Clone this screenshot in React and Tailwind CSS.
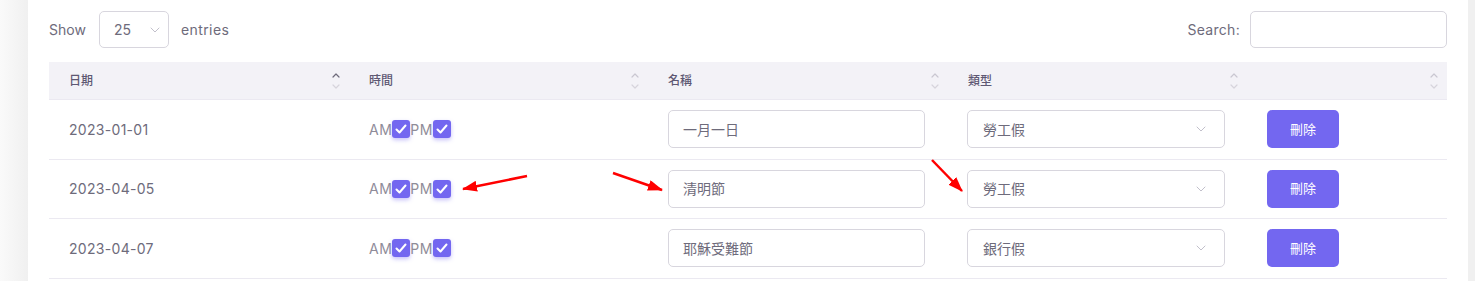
import { useState } from 'react';

const ROWS = [
    { date: '2023-01-01', name: '一月一日', type: '勞工假' },
    { date: '2023-04-05', name: '清明節', type: '勞工假' },
    { date: '2023-04-07', name: '耶穌受難節', type: '銀行假' },
];

const FONT = "font-['Inter','Noto_Sans_CJK_TC',sans-serif]";

function SortIcon({ active }) {
    return (
        <svg width="10" height="22" viewBox="0 0 10 22" fill="none" strokeWidth="1.2" strokeLinecap="round" strokeLinejoin="round">
            <path d="M2 7 L5 4 L8 7" stroke={active ? '#6e6b7b' : '#c9c7d1'} />
            <path d="M2 15 L5 18 L8 15" stroke="#d6d4dc" />
        </svg>
    );
}

function Check() {
    return (
        <span className="inline-flex items-center justify-center w-[18px] h-[18px] rounded-[3px] bg-[#7367f0] shadow-[0_2px_4px_rgba(115,103,240,0.4)]">
            <svg width="14" height="14" viewBox="0 0 14 14" fill="none">
                <path d="M2.5 7.5 L5.5 10.5 L11.5 3.5" stroke="white" strokeWidth="2" strokeLinecap="round" strokeLinejoin="round" />
            </svg>
        </span>
    );
}

function Chevron() {
    return (
        <svg width="10" height="6" viewBox="0 0 10 6" fill="none">
            <path d="M1 1 L5 5 L9 1" stroke="#c2c0cb" strokeWidth="1" strokeLinecap="round" strokeLinejoin="round" />
        </svg>
    );
}

export default function App() {
    const [rows, setRows] = useState(ROWS);

    return (
        <div className={`relative flex h-[281px] bg-white overflow-hidden ${FONT}`}>
            <div className="w-[28px] flex-shrink-0 bg-gradient-to-r from-[#fafafa] to-[#f0f0f0]" />
            <div className="flex-1 bg-white pl-[21px] pr-[21px]">
                <div className="flex items-center justify-between h-[62px] pb-[3px]">
                    <div className="flex items-center text-[14px] text-[#6e6b7b]">
                        <span className="w-[50px]">Show</span>
                        <div className="flex items-center justify-between w-[70px] h-[37px] border border-[#d8d6de] rounded-[5px] pl-[14px] pr-[8px]">
                            <span className="text-[14px] text-[#6e6b7b]">25</span>
                            <Chevron />
                        </div>
                        <span className="ml-[12px] tracking-[0.4px]">entries</span>
                    </div>
                    <div className="flex items-center gap-[10px] text-[14px] text-[#6e6b7b]">
                        <span className="tracking-[0.3px]">Search:</span>
                        <div className="w-[197px] h-[37px] border border-[#d8d6de] rounded-[5px]" />
                    </div>
                </div>

                <div className="grid grid-cols-[300px_299px_300px_299px_200px]">
                    {['日期', '時間', '名稱', '類型', ''].map((h, i) => (
                        <div key={i} className="flex items-center justify-between h-[38px] bg-[#f3f2f7] border-b border-[#ebe9f1] pl-[20px] pr-[8px]">
                            <span className="text-[12px] font-medium text-[#5e5873]">{h}</span>
                            <SortIcon active={i === 0} />
                        </div>
                    ))}

                    {rows.map((r) => (
                        <div key={r.date} className="contents">
                            <div className="flex items-center h-[59.5px] border-b border-[#ebe9f1] pl-[20px] text-[14px] text-[#6e6b7b] tracking-[0.3px]">
                                {r.date}
                            </div>
                            <div className="flex items-center h-[59.5px] border-b border-[#ebe9f1] pl-[20px] text-[14px] text-[#8f8c99]">
                                <span className="tracking-[0.5px]">AM</span>
                                <Check />
                                <span className="tracking-[0.5px]">PM</span>
                                <Check />
                            </div>
                            <div className="flex items-center h-[59.5px] border-b border-[#ebe9f1] pl-[20px]">
                                <div className="flex items-center w-[257px] h-[38px] border border-[#d8d6de] rounded-[5px] px-[14px] text-[14px] text-[#6e6b7b]">
                                    {r.name}
                                </div>
                            </div>
                            <div className="flex items-center h-[59.5px] border-b border-[#ebe9f1] pl-[19px]">
                                <div className="flex items-center justify-between w-[258px] h-[38px] border border-[#d8d6de] rounded-[5px] pl-[15px] pr-[18px] text-[14px] text-[#6e6b7b]">
                                    <span>{r.type}</span>
                                    <Chevron />
                                </div>
                            </div>
                            <div className="flex items-center h-[59.5px] border-b border-[#ebe9f1] pl-[20px]">
                                <button
                                    onClick={() => setRows((prev) => prev.filter((x) => x.date !== r.date))}
                                    className="w-[72px] h-[38px] rounded-[5px] bg-[#7367f0] text-white text-[13px]"
                                >
                                    刪除
                                </button>
                            </div>
                        </div>
                    ))}
                </div>
            </div>
            <div className="w-[7px] flex-shrink-0 bg-[#f0f0f0]" />

            {/* red annotation arrows */}
            <svg className="absolute inset-0 pointer-events-none" width="1475" height="281">
                <defs>
                    <marker id="head" markerWidth="6" markerHeight="4.4" refX="5.6" refY="2.2" orient="auto" markerUnits="strokeWidth">
                        <path d="M0 0 L6 2.2 L0 4.4 Z" fill="#ff0000" />
                    </marker>
                </defs>
                <line x1="527" y1="176" x2="463" y2="189" stroke="#ff0000" strokeWidth="2.5" markerEnd="url(#head)" />
                <line x1="613" y1="173" x2="662" y2="190" stroke="#ff0000" strokeWidth="2.5" markerEnd="url(#head)" />
                <line x1="932" y1="160" x2="962" y2="191" stroke="#ff0000" strokeWidth="2.5" markerEnd="url(#head)" />
            </svg>
        </div>
    );
}
